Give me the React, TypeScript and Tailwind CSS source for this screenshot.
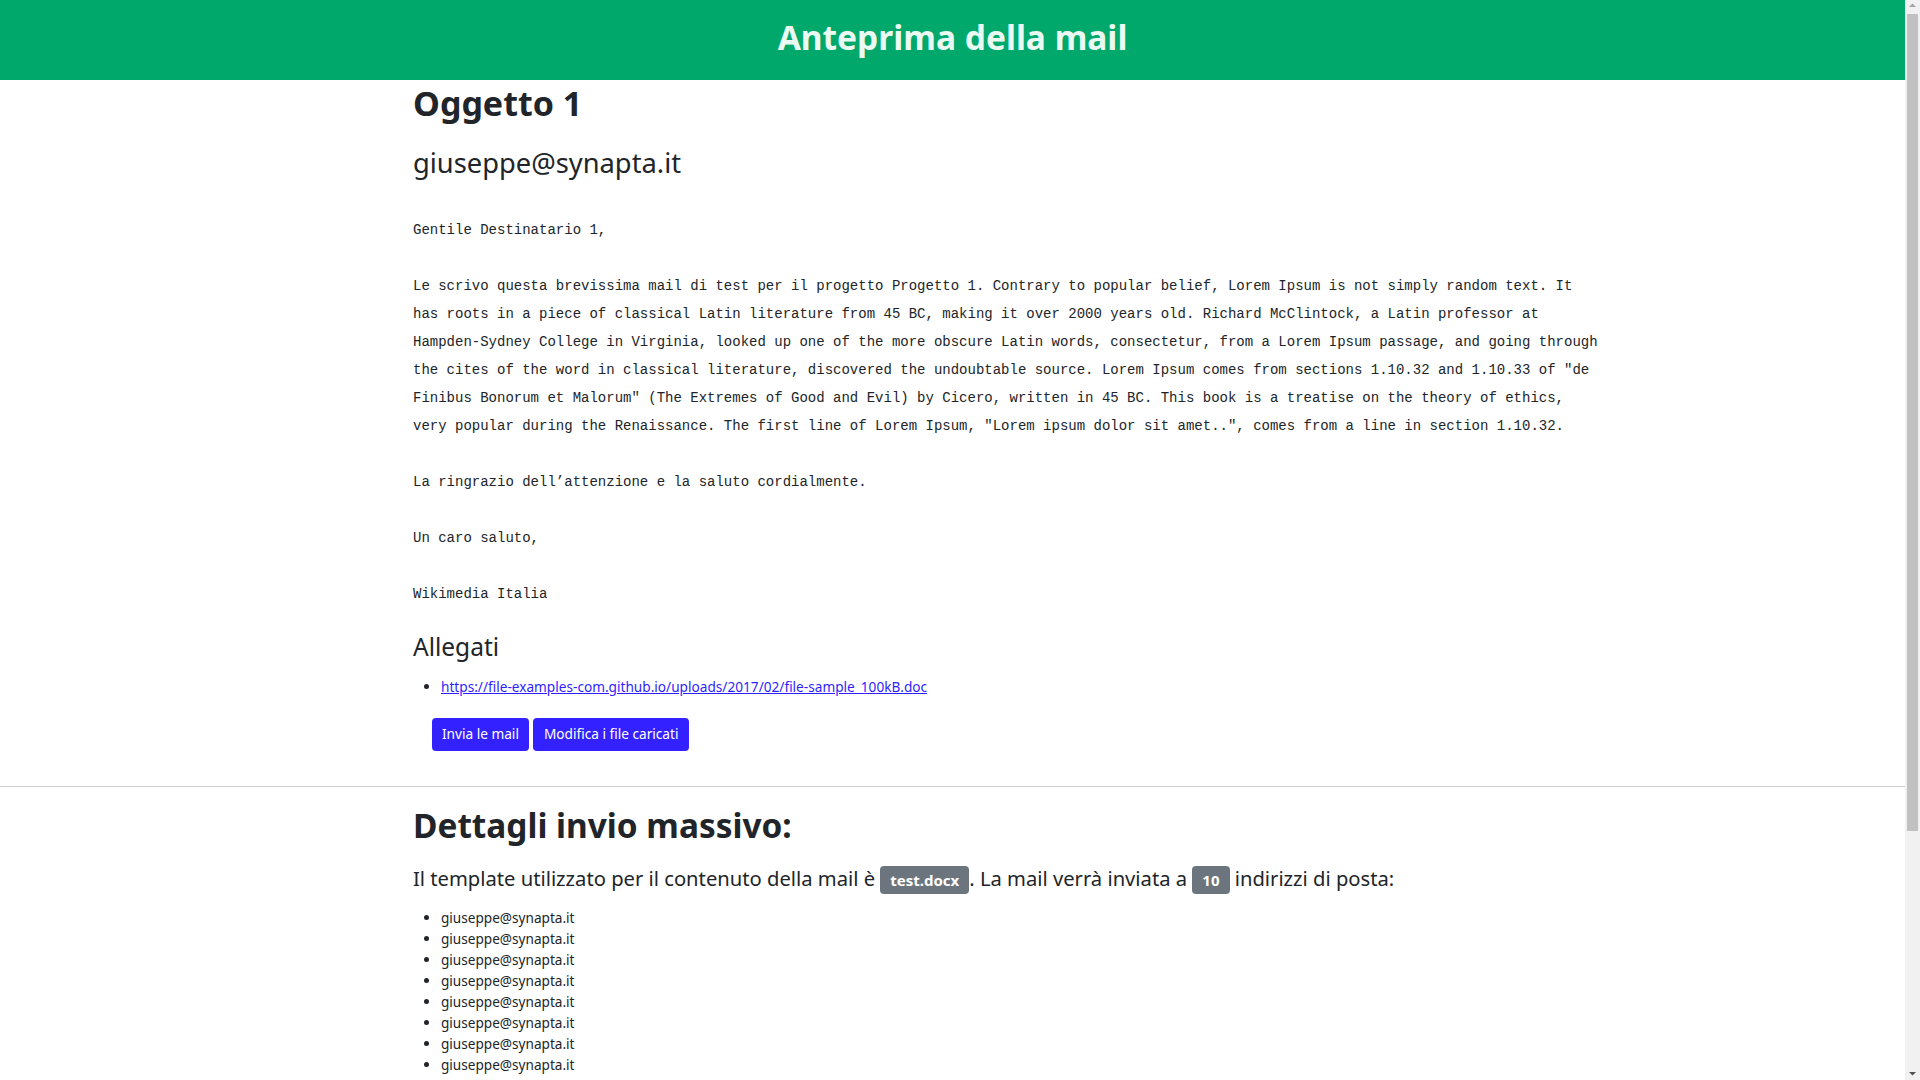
const SANS = "font-['Noto_Sans','Open_Sans',sans-serif]";

const recipients = Array.from({ length: 10 }, () => "giuseppe@synapta.it");

const body = `Gentile Destinatario 1,

Le scrivo questa brevissima mail di test per il progetto Progetto 1. Contrary to popular belief, Lorem Ipsum is not simply random text. It has roots in a piece of classical Latin literature from 45 BC, making it over 2000 years old. Richard McClintock, a Latin professor at Hampden-Sydney College in Virginia, looked up one of the more obscure Latin words, consectetur, from a Lorem Ipsum passage, and going through the cites of the word in classical literature, discovered the undoubtable source. Lorem Ipsum comes from sections 1.10.32 and 1.10.33 of "de Finibus Bonorum et Malorum" (The Extremes of Good and Evil) by Cicero, written in 45 BC. This book is a treatise on the theory of ethics, very popular during the Renaissance. The first line of Lorem Ipsum, "Lorem ipsum dolor sit amet..", comes from a line in section 1.10.32.

La ringrazio dell’attenzione e la saluto cordialmente.

Un caro saluto,

Wikimedia Italia`;

// browser scrollbar, as it appears in the screenshot
function Scrollbar() {
  return (
    <div className="flex h-screen w-[15px] shrink-0 flex-col items-center bg-[#f1f1f1]">
      <svg width="15" height="14" viewBox="0 0 15 14" className="shrink-0">
        <path d="M4 7h7L7.5 3.5z" fill="#a3a3a3" />
      </svg>
      <div className="h-[817px] w-[11px] shrink-0 bg-[#c1c1c1]" />
      <div className="flex-1" />
      <svg width="15" height="14" viewBox="0 0 15 14" className="shrink-0">
        <path d="M4 6h7L7.5 9.5z" fill="#505050" />
      </svg>
    </div>
  );
}

export default function App() {
  return (
    <div className="flex h-screen overflow-hidden bg-white">
      <div className={`${SANS} w-[1905px] shrink-0 text-[#212529]`}>
        {/* header */}
        <header className="flex h-20 items-center justify-center bg-[#00a86b] pb-[5px]">
          <h1 className="text-[33.5px] font-bold leading-none text-[#eafaf2]">
            Anteprima della mail
          </h1>
        </header>

        {/* mail preview */}
        <main className="ml-[413px] w-[1190px]">
          <h2 className="mt-[2px] text-[34px] font-bold leading-[43px]">Oggetto 1</h2>
          <h3 className="mt-[21px] text-[27.3px] leading-[34px]">giuseppe@synapta.it</h3>

          <pre className="mt-[36px] whitespace-pre-wrap font-['Liberation_Mono',monospace] text-[14px] leading-[28px]">
            {body}
          </pre>

          <h4 className="mt-[24px] text-[24.5px] leading-[29px]">Allegati</h4>
          <ul className="mt-[15px] list-disc pl-[28px] text-[13.65px] leading-[21px]">
            <li>
              <a href="#" className="text-[#2f1fff] underline">
                https://file-examples-com.github.io/uploads/2017/02/file-sample_100kB.doc
              </a>
            </li>
          </ul>

          <div className="mt-[21px] flex gap-[4px] pl-[19px]">
            <button className="h-[33px] rounded-[4px] bg-[#3322ff] px-[10px] text-[13.65px] text-white">
              Invia le mail
            </button>
            <button className="h-[33px] rounded-[4px] bg-[#3322ff] px-[11px] text-[13.65px] text-white">
              Modifica i file caricati
            </button>
          </div>
        </main>

        <hr className="mt-[35px] border-t border-[#d0d0d0]" />

        {/* bulk details */}
        <section className="ml-[413px] w-[1190px] pb-10">
          <h2 className="mt-[17px] text-[33.4px] font-bold leading-[43px]">
            Dettagli invio massivo:
          </h2>
          <p className="mt-[16px] text-[20.2px] leading-[30px]">
            Il template utilizzato per il contenuto della mail è{" "}
            <span className="rounded-[4px] bg-[#6c757d] px-[10px] py-[4px] text-[15px] font-bold text-white">
              test.docx
            </span>
            . La mail verrà inviata a{" "}
            <span className="rounded-[4px] bg-[#6c757d] px-[10px] py-[4px] text-[15px] font-bold text-white">
              10
            </span>{" "}
            indirizzi di posta:
          </p>
          <ul className="mt-[12px] list-disc pl-[28px] text-[13.6px] leading-[21px]">
            {recipients.map((r, i) => (
              <li key={i}>{r}</li>
            ))}
          </ul>
        </section>
      </div>
      <Scrollbar />
    </div>
  );
}
